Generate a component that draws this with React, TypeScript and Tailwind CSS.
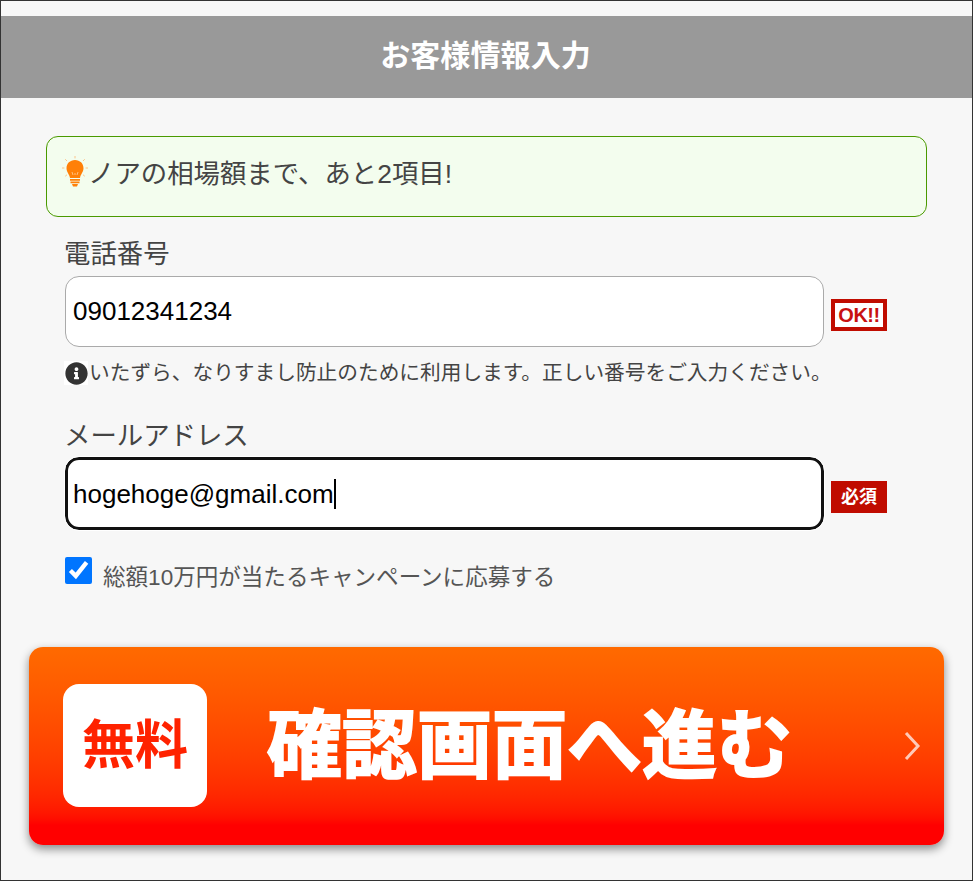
import { FaInfoCircle } from 'react-icons/fa';

const sans = "font-['Liberation_Sans','Noto_Sans_CJK_JP',sans-serif]";

function Bulb() {
  return (
    <svg viewBox="0 0 26 33" className="w-[26px] h-[33px] shrink-0">
      <g stroke="#fbc48a" strokeWidth="1" strokeLinecap="round">
        <path d="M13 0v2M3.500 3.500l1.200 1.200M22.500 3.500l-1.200 1.200M0 12h2M24 12h2M3.500 20l1.200-1M22.500 20l-1.200-1" />
      </g>
      <path d="M13 4c-5 0-8.500 3.600-8.500 8.200 0 3.900 2.800 5.700 3.500 9.800h10c.7-4.100 3.500-5.900 3.500-9.800C21.500 7.600 18 4 13 4z" fill="#ff8008" />
      <path d="M8 23h10v1.700H8zM8.500 25.500h9v1.700h-9zM10 28h6l-1 2.500h-4z" fill="#ff8008" />
      <path d="M11 19l-1-3M15 19l1-3M13 19v-2" stroke="#ffd9ad" strokeWidth=".7" fill="none" />
    </svg>
  );
}

function Field({ label, value, focused, badge }: { label: string; value: string; focused?: boolean; badge: React.ReactNode }) {
  return (
    <div>
      <label className="block text-[26.400px] leading-[30px] text-[#444] -ml-[1px]">{label}</label>
      <div className={focused ? "flex items-center mt-[6px]" : "flex items-center mt-[7px]"}>
        <div className="relative w-[759px]">
          <input
            readOnly
            value={value}
            className={
              focused
                ? "block w-full h-[73px] px-[5px] pt-[2px] rounded-[14px] bg-white text-[26px] text-black border-[3px] border-[#111] outline outline-1 outline-white"
                : "block w-full h-[71px] px-[7px] rounded-[14px] bg-white text-[26px] text-black border border-[#aaa]"
            }
          />
          {focused && <div className="absolute left-[269px] top-[22px] w-[2px] h-[30px] bg-black" />}
        </div>
        {badge}
      </div>
    </div>
  );
}

export default function App() {
  return (
    <div className={`${sans} h-[881px] bg-[#f7f7f7] border border-[#333] pt-[15px] overflow-hidden`}>
      <h1 className="h-[82px] pb-[3px] pr-[2px] bg-[#999] flex items-center justify-center text-white text-[30px] font-bold tracking-[0.1px]">お客様情報入力</h1>

      <div className="ml-[45px] mr-[45px] mt-[38px] h-[81px] rounded-[12px] border border-[#4a9a00] bg-[#f3fdee] flex pl-[15px] pt-[19px]">
        <Bulb />
        <span className="text-[26.400px] leading-[36px] text-[#444]">ノアの相場額まで、あと2項目!</span>
      </div>

      <div className="ml-[64px] mt-[22px]">
        <Field
          label="電話番号"
          value="09012341234"
          badge={
            <div className="ml-[7px] mt-[7px] w-[56px] h-[32px] border-[4px] border-[#c00c00] bg-white flex items-center justify-center text-[#c81010] text-[20px] font-black leading-none tracking-[-0.5px]">
              OK!!
            </div>
          }
        />
        <p className="flex items-center mt-[14px] h-[24px] text-[20.700px] text-[#444] whitespace-nowrap">
          <span className="w-[24px] h-[24px] -ml-[1px] mr-[1px] shrink-0 bg-white flex items-center justify-center">
            <FaInfoCircle className="w-[23px] h-[23px] text-[#333]" />
          </span>
          いたずら、なりすまし防止のために利用します。正しい番号をご入力ください。
        </p>
        <div className="mt-[36px]">
          <Field
            label="メールアドレス"
            value="hogehoge@gmail.com"
            focused
            badge={
              <div className="ml-[7px] mt-[7px] w-[56px] h-[32px] bg-[#c00c00] flex items-center justify-center text-white text-[18px] font-bold leading-none">
                必須
              </div>
            }
          />
        </div>
        <label className="flex items-start mt-[27px]">
          <input type="checkbox" checked readOnly className="w-[27px] h-[27px] m-0 accent-[#0075ff]" />
          <span className="ml-[11px] mt-[6px] text-[22.550px] leading-[30px] text-[#555]">総額10万円が当たるキャンペーンに応募する</span>
        </label>
      </div>

      <button className="ml-[28px] mt-[54px] w-[915px] h-[198px] rounded-[14px] bg-gradient-to-b from-[#ff6a00] via-[#ff0000] via-[90%] to-[#ff0000] shadow-[0_4px_10px_rgba(0,0,0,0.45)] flex items-center pl-[34px]">
        <span className="w-[144px] h-[123px] mb-[1px] rounded-[16px] bg-white flex items-center justify-center text-[53px] font-bold text-[#ff2200] leading-none shrink-0">
          無料
        </span>
        <span className="ml-[60px] w-[525px] text-[75px] font-bold text-white [-webkit-text-stroke:2px_white] leading-none whitespace-nowrap">
          確認画面へ進む
        </span>
        <svg viewBox="0 0 18 30" className="ml-[111px] w-[18px] h-[30px] shrink-0" fill="none" stroke="#ffc9b8" strokeWidth="3">
          <path d="M3 2l12 13L3 28" />
        </svg>
      </button>
    </div>
  );
}
